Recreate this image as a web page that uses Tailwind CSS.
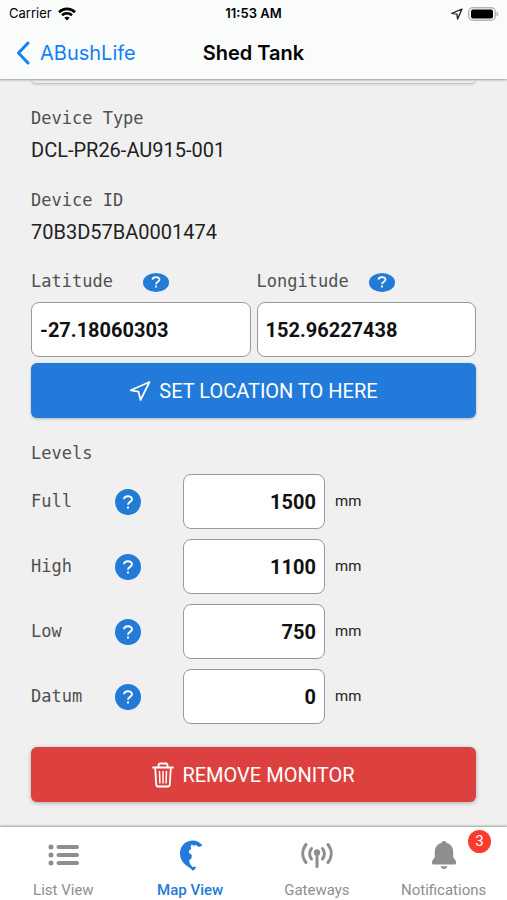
<!DOCTYPE html>
<html lang="en">
<head>
<meta charset="utf-8">
<meta name="viewport" content="width=device-width, initial-scale=1">
<title>Shed Tank</title>
<script src="https://cdn.jsdelivr.net/npm/@tailwindcss/browser@4"></script>
</head>
<body class="flex h-screen flex-col bg-[#f0f0f0] font-['Roboto',sans-serif] text-[#222]">
<header class="relative z-10 shrink-0 bg-[#fafbfb] pb-[1px] shadow-[0_1px_2px_rgba(0,0,0,0.35)] font-['Inter',sans-serif] text-black">
  <div class="grid h-7 grid-cols-3 items-center px-2 text-[13px]">
    <div class="flex items-center gap-[6px]">
      <span class="pl-px">Carrier</span>
      <svg class="h-[14px] w-[18px]" viewBox="0 0 18 14" fill="none" stroke="#000" stroke-width="2.6" aria-hidden="true"><path d="M1 5.2C5.500 .8 12.500 .8 17 5.200M4 8.300c2.800-2.700 7.200-2.700 10 0"/><path d="M9 13.500 6.300 10.700c1.500-1.400 3.900-1.400 5.400 0Z" fill="#000" stroke="none"/></svg>
    </div>
    <div class="text-center font-semibold">11:53 AM</div>
    <div class="flex items-center justify-end gap-[5px]">
      <svg class="h-3 w-3" viewBox="0 0 12 12" fill="none" stroke="#222" stroke-width="1.300" stroke-linejoin="round" aria-hidden="true"><path d="M11 1 .9 5.400l5 .7.700 5Z"/></svg>
      <svg class="h-[14px] w-[31px]" viewBox="0 0 31 14" aria-hidden="true"><rect x=".8" y=".8" width="26.400" height="12.400" rx="4" fill="#fff" stroke="#b3b3b3" stroke-width="1.500"/><rect x="3" y="2.500" width="22" height="9" rx="2" fill="#000"/><path d="M28.500 4.500c2.400.8 2.400 4.200 0 5Z" fill="#b3b3b3"/></svg>
    </div>
  </div>
  <div class="grid h-[50px] grid-cols-3 items-center px-4 text-[20px]">
    <a href="#" class="flex items-center gap-[10px] text-[#147efb]">
      <svg class="h-6 w-[14px] shrink-0" viewBox="0 0 14 24" fill="none" stroke="currentColor" stroke-width="3" stroke-linecap="round" stroke-linejoin="round" aria-hidden="true"><path d="M12 2 2.500 12 12 22"/></svg>
      <span>ABushLife</span>
    </a>
    <h1 class="text-center font-semibold">Shed Tank</h1>
  </div>
</header>

<main class="min-h-0 flex-1 overflow-hidden px-[31px]">
  <div class="h-[5px] rounded-b-md border-b border-[#c4c4c4] bg-[#ededed] shadow-sm"></div>
  <dl class="mt-[22px]">
    <dt class="font-['DejaVu_Sans_Mono',monospace] text-[17px] leading-6 text-[#505050]">Device Type</dt>
    <dd class="text-[20px] leading-10">DCL-PR26-AU915-001</dd>
    <dt class="mt-[18px] font-['DejaVu_Sans_Mono',monospace] text-[17px] leading-6 text-[#505050]">Device ID</dt>
    <dd class="text-[20px] leading-10">70B3D57BA0001474</dd>
  </dl>
  <form>
    <div class="mt-[18px] grid grid-cols-2 gap-[6px]">
      <div>
        <div class="flex h-6 items-center font-['DejaVu_Sans_Mono',monospace] text-[17px] text-[#505050]">
          <label for="lat" class="w-28">Latitude</label>
          <button type="button" aria-label="Latitude help" class="flex h-[19px] w-[26px] items-center justify-center rounded-[50%] bg-[#227bd5] text-white"><svg class="h-3 w-3" viewBox="0 0 12 12" fill="none" stroke="currentColor" stroke-width="1.700" aria-hidden="true"><path d="M2.500 3.600C2.700.4 9.500.4 9.500 3.600 9.500 5.700 6 5.800 6 8.200M6 9.500v2"/></svg></button>
        </div>
        <input id="lat" value="-27.18060303" class="mt-2 h-[55px] w-full rounded-lg border border-[#999] bg-white px-2 text-[20px] font-bold text-[#111]">
      </div>
      <div>
        <div class="flex h-6 items-center font-['DejaVu_Sans_Mono',monospace] text-[17px] text-[#505050]">
          <label for="lng" class="w-28">Longitude</label>
          <button type="button" aria-label="Longitude help" class="flex h-[19px] w-[26px] items-center justify-center rounded-[50%] bg-[#227bd5] text-white"><svg class="h-3 w-3" viewBox="0 0 12 12" fill="none" stroke="currentColor" stroke-width="1.700" aria-hidden="true"><path d="M2.500 3.600C2.700.4 9.500.4 9.500 3.600 9.500 5.700 6 5.800 6 8.200M6 9.500v2"/></svg></button>
        </div>
        <input id="lng" value="152.96227438" class="mt-2 h-[55px] w-full rounded-lg border border-[#999] bg-white px-2 text-[20px] font-bold text-[#111]">
      </div>
    </div>
    <button type="button" class="mt-[6px] flex h-[55px] w-full items-center justify-center gap-2 rounded-md bg-[#227bda] text-[20px] text-white shadow-[0_1px_3px_rgba(0,0,0,0.25)]">
      <svg class="h-[22px] w-[22px]" viewBox="0 0 22 22" fill="none" stroke="currentColor" stroke-width="1.700" stroke-linejoin="round" aria-hidden="true"><path d="M20.500 2 1.800 10.300l7.700 1.400 2 8.300Z"/></svg>
      SET LOCATION TO HERE
    </button>

    <fieldset class="mt-[23px]">
      <legend class="font-['DejaVu_Sans_Mono',monospace] text-[17px] leading-6 text-[#505050]">Levels</legend>
      <div class="mt-[9px] flex flex-col gap-[10px]">
        <div class="flex items-center">
          <label for="full" class="w-[84px] font-['DejaVu_Sans_Mono',monospace] text-[17px] text-[#505050]">Full</label>
          <button type="button" aria-label="Full help" class="flex h-[26px] w-[26px] items-center justify-center rounded-full bg-[#227bd5] text-white"><svg class="h-[14px] w-3" viewBox="0 0 12 14" fill="none" stroke="currentColor" stroke-width="1.900" aria-hidden="true"><path d="M2 4.300C2.200.2 10 .2 10 4.300 10 6.900 6 6.900 6 9.700M6 11.400v2.200"/></svg></button>
          <input id="full" value="1500" inputmode="numeric" class="ml-[42px] h-[55px] w-[142px] rounded-lg border border-[#999] bg-white px-2 text-right text-[20px] font-bold text-[#111]">
          <span class="ml-[10px] text-[15px]">mm</span>
        </div>
        <div class="flex items-center">
          <label for="high" class="w-[84px] font-['DejaVu_Sans_Mono',monospace] text-[17px] text-[#505050]">High</label>
          <button type="button" aria-label="High help" class="flex h-[26px] w-[26px] items-center justify-center rounded-full bg-[#227bd5] text-white"><svg class="h-[14px] w-3" viewBox="0 0 12 14" fill="none" stroke="currentColor" stroke-width="1.900" aria-hidden="true"><path d="M2 4.300C2.200.2 10 .2 10 4.300 10 6.900 6 6.900 6 9.700M6 11.400v2.200"/></svg></button>
          <input id="high" value="1100" inputmode="numeric" class="ml-[42px] h-[55px] w-[142px] rounded-lg border border-[#999] bg-white px-2 text-right text-[20px] font-bold text-[#111]">
          <span class="ml-[10px] text-[15px]">mm</span>
        </div>
        <div class="flex items-center">
          <label for="low" class="w-[84px] font-['DejaVu_Sans_Mono',monospace] text-[17px] text-[#505050]">Low</label>
          <button type="button" aria-label="Low help" class="flex h-[26px] w-[26px] items-center justify-center rounded-full bg-[#227bd5] text-white"><svg class="h-[14px] w-3" viewBox="0 0 12 14" fill="none" stroke="currentColor" stroke-width="1.900" aria-hidden="true"><path d="M2 4.300C2.200.2 10 .2 10 4.300 10 6.900 6 6.900 6 9.700M6 11.400v2.200"/></svg></button>
          <input id="low" value="750" inputmode="numeric" class="ml-[42px] h-[55px] w-[142px] rounded-lg border border-[#999] bg-white px-2 text-right text-[20px] font-bold text-[#111]">
          <span class="ml-[10px] text-[15px]">mm</span>
        </div>
        <div class="flex items-center">
          <label for="datum" class="w-[84px] font-['DejaVu_Sans_Mono',monospace] text-[17px] text-[#505050]">Datum</label>
          <button type="button" aria-label="Datum help" class="flex h-[26px] w-[26px] items-center justify-center rounded-full bg-[#227bd5] text-white"><svg class="h-[14px] w-3" viewBox="0 0 12 14" fill="none" stroke="currentColor" stroke-width="1.900" aria-hidden="true"><path d="M2 4.300C2.200.2 10 .2 10 4.300 10 6.900 6 6.900 6 9.700M6 11.400v2.200"/></svg></button>
          <input id="datum" value="0" inputmode="numeric" class="ml-[42px] h-[55px] w-[142px] rounded-lg border border-[#999] bg-white px-2 text-right text-[20px] font-bold text-[#111]">
          <span class="ml-[10px] text-[15px]">mm</span>
        </div>
      </div>
    </fieldset>
    <button type="button" class="mt-[23px] flex h-[55px] w-full items-center justify-center gap-2 rounded-md bg-[#dc4140] text-[20px] text-white shadow-[0_1px_4px_rgba(0,0,0,0.3)]">
      <svg class="h-[26px] w-[22px]" viewBox="0 0 22 26" fill="none" stroke="currentColor" stroke-width="1.800" stroke-linecap="round" stroke-linejoin="round" aria-hidden="true"><path d="M1 5.500h20M6.500 5V3.500Q6.500 1.500 8.500 1.500h5Q15.500 1.500 15.500 3.500V5M3.200 6l1 16.500Q4.300 24.500 6.300 24.500h9.400Q17.700 24.500 17.800 22.500L18.800 6"/><path d="M7.500 9.500l.4 11.500M11 9.500V21M14.500 9.500 14.100 21" stroke-width="1.500"/></svg>
      REMOVE MONITOR
    </button>
  </form>
</main>

<nav class="relative grid h-[73px] shrink-0 grid-cols-4 bg-white text-[15px] text-[#8e8e8e] shadow-[0_-1px_2px_rgba(0,0,0,0.35)]">
  <a href="#" class="flex flex-col items-center gap-[7px] pt-3">
    <svg class="h-8 w-8" viewBox="-1 0 32 32" fill="none" stroke="currentColor" stroke-width="4" stroke-linecap="round" aria-hidden="true"><path d="M10.500 8h18.500M10.500 16h18.500M10.500 24h18.500"/><path d="M3 8h.01M3 16h.01M3 24h.01" stroke-width="5"/></svg>
    <span class="leading-6">List View</span>
  </a>
  <a href="#" aria-current="page" class="flex flex-col items-center gap-[7px] pt-3 text-[#227bda]">
    <svg class="h-8 w-8" viewBox="-2 0 32 32" fill="currentColor" aria-hidden="true"><path d="M26.500 6.500C23.500 2.500 17.500.3 12.500 2.300 7 4 4 9 4 14.500c0 7 4.500 11.500 9.500 14.100l3.400 3.200 2-1.500 1.200-2.600-3.600.4-2.600-3.300-.8-3.500 2.400-2 .3-3.200-2.800-2.300.3-2.700 1.800-.8-.4-2.800 1.200-2.300 1.400 1.500 2.200-.6 3.400 1.800Z"/></svg>
    <span class="leading-6 font-medium">Map View</span>
  </a>
  <a href="#" class="flex flex-col items-center gap-[7px] pt-3">
    <svg class="h-8 w-8" viewBox="0 0 32 32" fill="none" stroke="currentColor" stroke-width="3" stroke-linecap="round" aria-hidden="true"><path d="M16 14v13.500M10.500 9.500c-2.500 3-2.500 7.500 0 10.500M21.500 9.500c2.500 3 2.500 7.500 0 10.500M5 5.500C.800 11 .8 18 5 23.500M27 5.500c4.200 5.500 4.200 12.500 0 18"/><circle cx="16" cy="13.500" r="3.200" fill="currentColor" stroke="none"/></svg>
    <span class="leading-6">Gateways</span>
  </a>
  <a href="#" class="relative flex flex-col items-center gap-[7px] pt-3">
    <svg class="h-8 w-8" viewBox="0 0 32 32" fill="currentColor" aria-hidden="true"><path d="M16 2c-1.600 0-2.300.8-2.500 2C9 5 6.800 8.500 6.800 13v5L4 22.300v1.600Q4 25.500 5.500 25.500h21q1.500 0 1.500-1.600v-1.600L25.200 18v-5c0-4.500-2.200-8-6.700-9C18.300 2.800 17.600 2 16 2ZM12.700 27.200h6.600C19 29 17.500 30 16 30s-3-1-3.300-2.800Z"/></svg>
    <span class="leading-6">Notifications</span>
    <span class="absolute top-[3px] right-4 flex h-[23px] w-[23px] items-center justify-center rounded-full bg-[#fc3b30] text-[15px] text-white">3</span>
  </a>
</nav>
</body>
</html>
